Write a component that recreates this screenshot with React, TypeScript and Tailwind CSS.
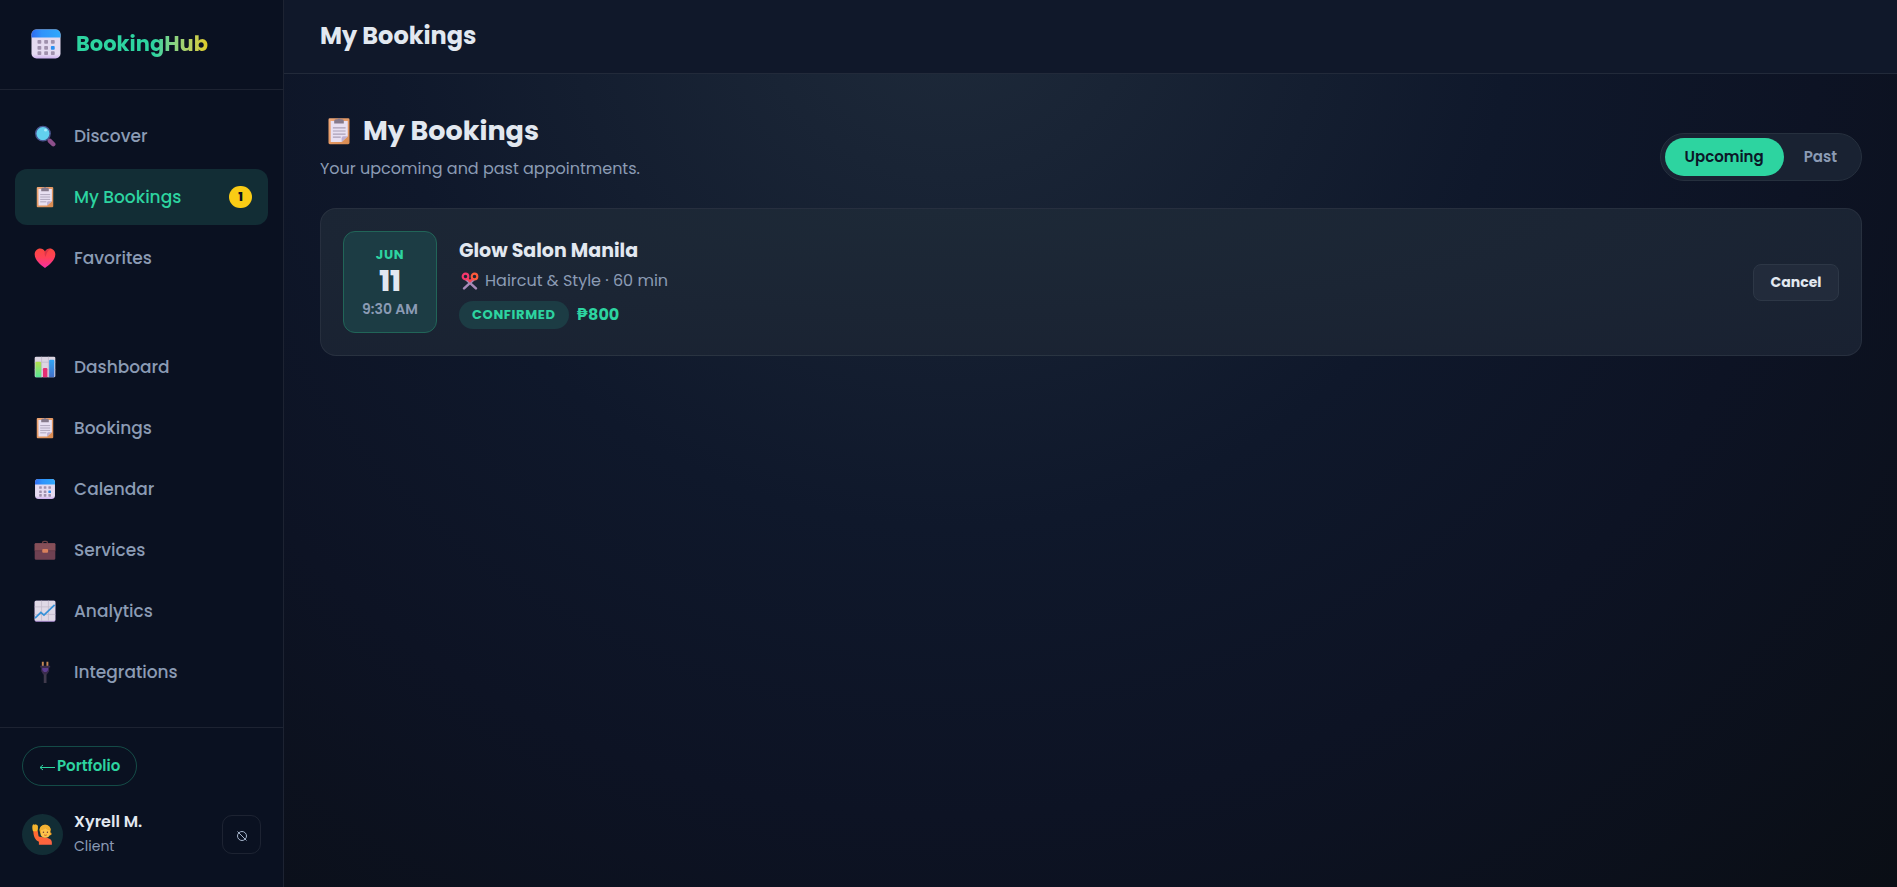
import { useState } from "react";
import type { ReactNode } from "react";

function CalendarIcon({ className }: { className?: string }) {
  return (
    <svg viewBox="0 0 32 32" className={className} aria-hidden="true">
      <defs>
        <linearGradient id="cal-top" x1="0" x2="1">
          <stop offset="0" stopColor="#2f6bf0" />
          <stop offset=".35" stopColor="#2f93fb" />
          <stop offset="1" stopColor="#30a8fb" />
        </linearGradient>
        <linearGradient id="cal-body" x1="0" x2="0" y1="0" y2="1">
          <stop offset="0" stopColor="#e3d9ee" />
          <stop offset=".85" stopColor="#e6dcf2" />
          <stop offset="1" stopColor="#cdb0ee" />
        </linearGradient>
      </defs>
      <rect x="1.5" y="1.5" width="29" height="29" rx="5" fill="url(#cal-body)" />
      <path d="M1.500 9.500V6.500a5 5 0 0 1 5-5h19a5 5 0 0 1 5 5v3z" fill="url(#cal-top)" />
      {[12, 18, 23.3].map((y) =>
        [7.5, 14.2, 20.9].map((x) => (
          <rect
            key={`${x}-${y}`}
            x={x}
            y={y}
            width="3.8"
            height="3.8"
            rx=".8"
            fill={x === 20.9 && y === 18 ? "#2c8ff0" : "#a091ad"}
          />
        )),
      )}
    </svg>
  );
}

function SearchIcon({ className }: { className?: string }) {
  return (
    <svg viewBox="0 0 32 32" className={className} aria-hidden="true">
      <path d="m20.500 20.500 2.500 2.500" stroke="#6b5a86" strokeWidth="3" />
      <path d="m23 23 5 5" stroke="#8d4f8b" strokeWidth="6.500" strokeLinecap="round" />
      <circle cx="13" cy="12.500" r="10.500" fill="#62d0ef" stroke="#4a5590" strokeWidth="2" />
      <circle cx="16.800" cy="7.500" r="2" fill="#a9ecfb" />
    </svg>
  );
}

function ClipboardIcon({ className }: { className?: string }) {
  return (
    <svg viewBox="0 0 32 32" className={className} aria-hidden="true">
      <defs>
        <linearGradient id="clip-board" x1="0" x2="1" y1="0" y2="1">
          <stop offset="0" stopColor="#f0a878" />
          <stop offset="1" stopColor="#d88a50" />
        </linearGradient>
      </defs>
      <rect x="4" y="1.500" width="24" height="29.500" rx="1.500" fill="url(#clip-board)" />
      <path d="M6.500 4.500H26V22l-7 6.500H6.500z" fill="#e8e0f2" />
      <path d="M26 22h-5a2 2 0 0 0-2 2v4.500z" fill="#bdaed0" />
      <path d="M10.500 7.500V4.500a2 2 0 0 1 2-2h1.800a2 2 0 0 1 3.400 0h1.800a2 2 0 0 1 2 2v3z" fill="#867a8c" />
      <path d="M9 12.500h14.500M9 16h14.500M9 19.500h14.500M9 23h9" stroke="#a99fb6" strokeWidth="1.300" />
    </svg>
  );
}

function HeartIcon({ className }: { className?: string }) {
  return (
    <svg viewBox="0 0 32 32" className={className} aria-hidden="true">
      <defs>
        <linearGradient id="heart-fill" x1="0" x2="0" y1="0" y2="1">
          <stop offset="0" stopColor="#f8483f" />
          <stop offset=".45" stopColor="#ff4156" />
          <stop offset="1" stopColor="#f62fa5" />
        </linearGradient>
      </defs>
      <path
        d="M16 30.500C10 26 1 19.500 1 10.500 1 5.500 4.500 2 9 2c3 0 5.500 1.800 7 4.500C17.500 3.800 20 2 23 2c4.500 0 8 3.500 8 8.500C31 19.500 22 26 16 30.500z"
        fill="url(#heart-fill)"
      />
      <path d="M16 6.500c-1 3-.5 6 1 8 .5-5 3-9 7-12-4 0-6.500 1.500-8 4z" fill="#c8284a" opacity=".6" />
    </svg>
  );
}

function BarChartIcon({ className }: { className?: string }) {
  return (
    <svg viewBox="0 0 32 32" className={className} aria-hidden="true">
      <defs>
        <linearGradient id="bar-green" x1="0" x2="0" y1="0" y2="1">
          <stop offset="0" stopColor="#b4e04c" />
          <stop offset="1" stopColor="#55e598" />
        </linearGradient>
        <linearGradient id="bar-blue" x1="0" x2="0" y1="0" y2="1">
          <stop offset="0" stopColor="#31a6f5" />
          <stop offset="1" stopColor="#4470c8" />
        </linearGradient>
      </defs>
      <rect x="1" y="1" width="30" height="30" rx="2" fill="#dcd5e2" />
      <path d="M11 1v30M21 1v30M1 9h30M1 20h30" stroke="#bdb5c6" strokeWidth="1" />
      <path d="M2 31V10a1.500 1.500 0 0 1 1.500-1.500H9A1.500 1.500 0 0 1 10.500 10v21z" fill="url(#bar-green)" />
      <path d="M13 31V19a1.500 1.500 0 0 1 1.500-1.500h3.500a1.500 1.500 0 0 1 1.500 1.500v12z" fill="#e62e73" />
      <path d="M22 31V7a1.500 1.500 0 0 1 1.500-1.500H28A1.500 1.500 0 0 1 29.500 7v24z" fill="url(#bar-blue)" />
    </svg>
  );
}

function BriefcaseIcon({ className }: { className?: string }) {
  return (
    <svg viewBox="0 0 32 32" className={className} aria-hidden="true">
      <path d="M12.500 7V5.500a2 2 0 0 1 2-2h3a2 2 0 0 1 2 2V7" fill="none" stroke="#6d4144" strokeWidth="2" />
      <rect x="1" y="6" width="30" height="24" rx="1.500" fill="#6f4152" />
      <path d="M1 7.500A1.500 1.500 0 0 1 2.500 6h27A1.500 1.500 0 0 1 31 7.500V17H1z" fill="#864f58" />
      <path d="M1 17h30" stroke="#5c3645" />
      <rect x="12" y="14.500" width="8.500" height="5.500" rx="1.500" fill="#d9805c" />
    </svg>
  );
}

function TrendIcon({ className }: { className?: string }) {
  return (
    <svg viewBox="0 0 32 32" className={className} aria-hidden="true">
      <rect x="1" y="1" width="30" height="30.500" rx="2" fill="#b797dc" />
      <rect x="1" y="1" width="30" height="29" rx="2" fill="#e0d9e6" />
      <path d="M11 1v29M21 1v29M1 10h30M1 21h30" stroke="#c3bbcb" strokeWidth="1.200" />
      <path d="m1.500 26.500 8.500-8.500 4.500 4L30 7" fill="none" stroke="#3591d8" strokeWidth="2.500" />
    </svg>
  );
}

function PlugIcon({ className }: { className?: string }) {
  return (
    <svg viewBox="0 0 32 32" className={className} aria-hidden="true">
      <path d="M12.800 1v7M19.500 1v7" stroke="#c48855" strokeWidth="2.800" />
      <path d="M9 7h14.500v2.500H22V15l-3.500 4.500h-5L10.500 15V9.500H9z" fill="#3a2c4c" />
      <path d="M12 10h8.500v3l-2.500 3h-3.500L12 13z" fill="#5c3d90" />
      <path d="M16.200 19v13" stroke="#403a4c" strokeWidth="4" />
    </svg>
  );
}

function ScissorsIcon({ className }: { className?: string }) {
  return (
    <svg viewBox="0 0 32 32" className={className} aria-hidden="true">
      <path d="M10 14 26.500 29M22 14 5.500 29" stroke="#a78bb8" strokeWidth="4.500" strokeLinecap="round" />
      <circle cx="8" cy="8" r="5" fill="none" stroke="#f4386c" strokeWidth="3.800" />
      <circle cx="24" cy="8" r="5" fill="none" stroke="#fb5a3c" strokeWidth="3.800" />
      <path d="m11.500 12 5 5.500M20.500 12l-5 5.500" stroke="#f5465a" strokeWidth="4" />
    </svg>
  );
}

function PersonIcon({ className }: { className?: string }) {
  return (
    <svg viewBox="0 0 32 32" className={className} aria-hidden="true">
      <defs>
        <linearGradient id="person-shirt" x1="0" x2="1" y1="0" y2="1">
          <stop offset="0" stopColor="#ff6a2e" />
          <stop offset="1" stopColor="#fb6244" />
        </linearGradient>
      </defs>
      <path d="M2 10h6.500l1.500 8.500c3 2.500 17 .5 19.500 6.500 1 2 .8 4 .8 6.500H10.500V27C5 25 2 19 2 10z" fill="url(#person-shirt)" />
      <path d="M1.500 11C.5 8 0 4 1 1.500l1.500-1 1.500.8 2-.8 1.500 1 1.500 1V8l-1 3z" fill="#f5b52e" />
      <circle cx="20" cy="9.500" r="8.500" fill="#e39a18" />
      <circle cx="27.500" cy="15" r="2.300" fill="#f5a62a" />
      <path d="M13 9c3 0 5.500-1 7-3.500 1.500 2.500 4.500 3.500 7.500 4V15c0 4-3.500 6-7 6s-7.500-2-7.500-6z" fill="#fdc34a" />
      <path d="M11.500 9C12 3.500 16 1 20 1s8 2.500 8.500 8c-4 0-6.500-1-8-3-2 2.500-5 3.500-9 3z" fill="#f2b233" />
      <circle cx="17.500" cy="12.500" r="1.100" fill="#6b3b36" />
      <circle cx="23.500" cy="12.500" r="1.100" fill="#6b3b36" />
      <path d="M18.500 16.500c1.500 1 2.800 1 4 0" stroke="#c0472c" strokeWidth="1.300" fill="none" />
    </svg>
  );
}

type NavItem = {
  label: string;
  icon: ReactNode;
  badge?: number;
};

const NAV_ICON = "h-[22px] w-[22px] shrink-0";

const CLIENT_NAV: NavItem[] = [
  { label: "Discover", icon: <SearchIcon className={NAV_ICON} /> },
  { label: "My Bookings", icon: <ClipboardIcon className={NAV_ICON} />, badge: 1 },
  { label: "Favorites", icon: <HeartIcon className={NAV_ICON} /> },
];

const BUSINESS_NAV: NavItem[] = [
  { label: "Dashboard", icon: <BarChartIcon className={NAV_ICON} /> },
  { label: "Bookings", icon: <ClipboardIcon className={NAV_ICON} /> },
  { label: "Calendar", icon: <CalendarIcon className={NAV_ICON} /> },
  { label: "Services", icon: <BriefcaseIcon className={NAV_ICON} /> },
  { label: "Analytics", icon: <TrendIcon className={NAV_ICON} /> },
  { label: "Integrations", icon: <PlugIcon className={NAV_ICON} /> },
];

function NavList({ items, active }: { items: NavItem[]; active: string }) {
  return (
    <ul className="flex flex-col gap-[5px]">
      {items.map((item) => (
        <li key={item.label}>
          <a
            href="#"
            className={`flex h-14 items-center gap-[18px] rounded-xl px-[19px] text-[17px] font-medium ${
              item.label === active ? "bg-[#122d35] text-[#2dd4a0]" : "text-[#8b9bb4]"
            }`}
          >
            {item.icon}
            <span className="flex-1 pt-[2px]">{item.label}</span>
            {item.badge && (
              <span className="mr-[-3px] flex h-[22px] w-[23px] items-center justify-center rounded-full bg-[#facc15] text-[12px] font-extrabold text-[#0b1120]">
                {item.badge}
              </span>
            )}
          </a>
        </li>
      ))}
    </ul>
  );
}

function Sidebar() {
  return (
    <aside className="flex w-[284px] shrink-0 flex-col border-r border-white/8 bg-[#0a1121]">
      <div className="flex h-[90px] items-center gap-[14px] border-b border-white/8 px-[30px] pb-[2px]">
        <CalendarIcon className="h-8 w-8" />
        <span className="bg-gradient-to-r from-[#2dd4a0] from-60% to-[#e0cb20] bg-clip-text text-[21px] font-bold text-transparent">
          BookingHub
        </span>
      </div>

      <nav className="flex flex-1 flex-col gap-[53px] px-[15px] pt-[18px]">
        <NavList items={CLIENT_NAV} active="My Bookings" />
        <NavList items={BUSINESS_NAV} active="" />
      </nav>

      <div className="border-t border-white/8 px-[22px] pt-[18px] pb-[29px]">
        <a
          href="#"
          className="flex h-10 w-fit items-center gap-[2px] rounded-full border border-[#2dd4a0]/30 px-4 text-[15px] font-semibold text-[#2dd4a0]"
        >
          <svg viewBox="0 0 16 10" className="h-[10px] w-4" fill="none" stroke="currentColor" aria-hidden="true">
            <path d="M1 6.500h15M4 4l-3 2.500L4 9" />
          </svg>
          Portfolio
        </a>
        <div className="mt-6 flex items-center gap-[11px]">
          <div className="flex h-[41px] w-[41px] items-center justify-center rounded-full bg-[#122d35]">
            <PersonIcon className="h-[21px] w-[21px]" />
          </div>
          <div className="flex-1">
            <p className="text-[16px] leading-6 font-semibold text-[#e2e8f0]">Xyrell M.</p>
            <p className="text-[14px] leading-6 text-[#8b9bb4]">Client</p>
          </div>
          <button
            type="button"
            aria-label="Log out"
            className="flex h-[39px] w-[39px] items-center justify-center rounded-[10px] border border-white/8 text-[#a5b4cb]"
          >
            <svg viewBox="0 0 12 12" className="mt-1 h-3 w-3" fill="none" stroke="currentColor" aria-hidden="true">
              <circle cx="6" cy="6" r="4.500" />
              <path d="m1.500 1.500 9 9" />
            </svg>
          </button>
        </div>
      </div>
    </aside>
  );
}

const TABS = ["Upcoming", "Past"];

function BookingCard() {
  return (
    <article className="mt-[27px] flex items-center gap-[22px] rounded-2xl border border-white/6 bg-[radial-gradient(ellipse_at_40%_0%,#1d2937,#192131)] p-[22px]">
      <div className="flex h-[102px] w-[94px] flex-col items-center justify-center rounded-xl border border-[#216558] bg-[#1c3c44]">
        <span className="text-[13px] leading-[22px] font-bold tracking-wider text-[#2dd4a0]">JUN</span>
        <span className="text-[28px] leading-8 font-extrabold text-[#e2e8f0]">11</span>
        <span className="text-[14px] leading-[22px] font-semibold text-[#8b9bb4]">9:30 AM</span>
      </div>

      <div className="flex-1 pt-[2px]">
        <h3 className="text-[19px] leading-7 font-bold text-[#e2e8f0]">Glow Salon Manila</h3>
        <p className="mt-1 flex items-center gap-[6px] pl-[2px] text-[16px] leading-6 text-[#8b9bb4]">
          <ScissorsIcon className="h-[18px] w-[18px]" /> Haircut &amp; Style · 60 min
        </p>
        <div className="mt-2 flex items-center gap-2">
          <span className="flex h-7 items-center rounded-full bg-[#1c3c44] px-[13px] text-[13px] font-bold tracking-wider text-[#2dd4a0]">
            CONFIRMED
          </span>
          <span className="text-[16px] font-bold text-[#2dd4a0]">₱800</span>
        </div>
      </div>

      <button
        type="button"
        className="h-[37px] w-[86px] rounded-lg border border-[#2d3746] bg-[#222b3b] text-[14px] font-bold text-[#e2e8f0]"
      >
        Cancel
      </button>
    </article>
  );
}

export default function App() {
  const [tab, setTab] = useState("Upcoming");

  return (
    <div className="flex min-h-screen bg-[radial-gradient(ellipse_at_top,#1e2a3a_0%,#0f182b_42%,#0d1324_65%,#0a0e15_100%)] font-['Poppins','Inter',sans-serif] text-[#e2e8f0]">
      <Sidebar />

      <main className="flex-1">
        <header className="flex h-[74px] items-center border-b border-white/8 bg-[#10182a] px-9 pb-[2px]">
          <h1 className="text-[24px] leading-8 font-bold">My Bookings</h1>
        </header>

        <section className="pt-9 pr-[35px] pl-9">
          <div className="flex items-end justify-between">
            <div>
              <h2 className="flex items-center gap-[10px] pl-[5px] text-[27px] leading-[42px] font-bold">
                <ClipboardIcon className="h-7 w-7" /> My Bookings
              </h2>
              <p className="mt-[5px] text-[16px] leading-6 text-[#8b9bb4]">
                Your upcoming and past appointments.
              </p>
            </div>

            <div className="flex rounded-full border border-[#26303e] bg-[#192232] p-1">
              {TABS.map((name) => (
                <button
                  key={name}
                  type="button"
                  onClick={() => setTab(name)}
                  className={`h-[38px] rounded-full px-5 pt-px text-[15px] font-semibold ${
                    tab === name ? "bg-[#2dd4a0] text-[#0b1728]" : "text-[#8b9bb4]"
                  }`}
                >
                  {name}
                </button>
              ))}
            </div>
          </div>

          <BookingCard />
        </section>
      </main>
    </div>
  );
}
